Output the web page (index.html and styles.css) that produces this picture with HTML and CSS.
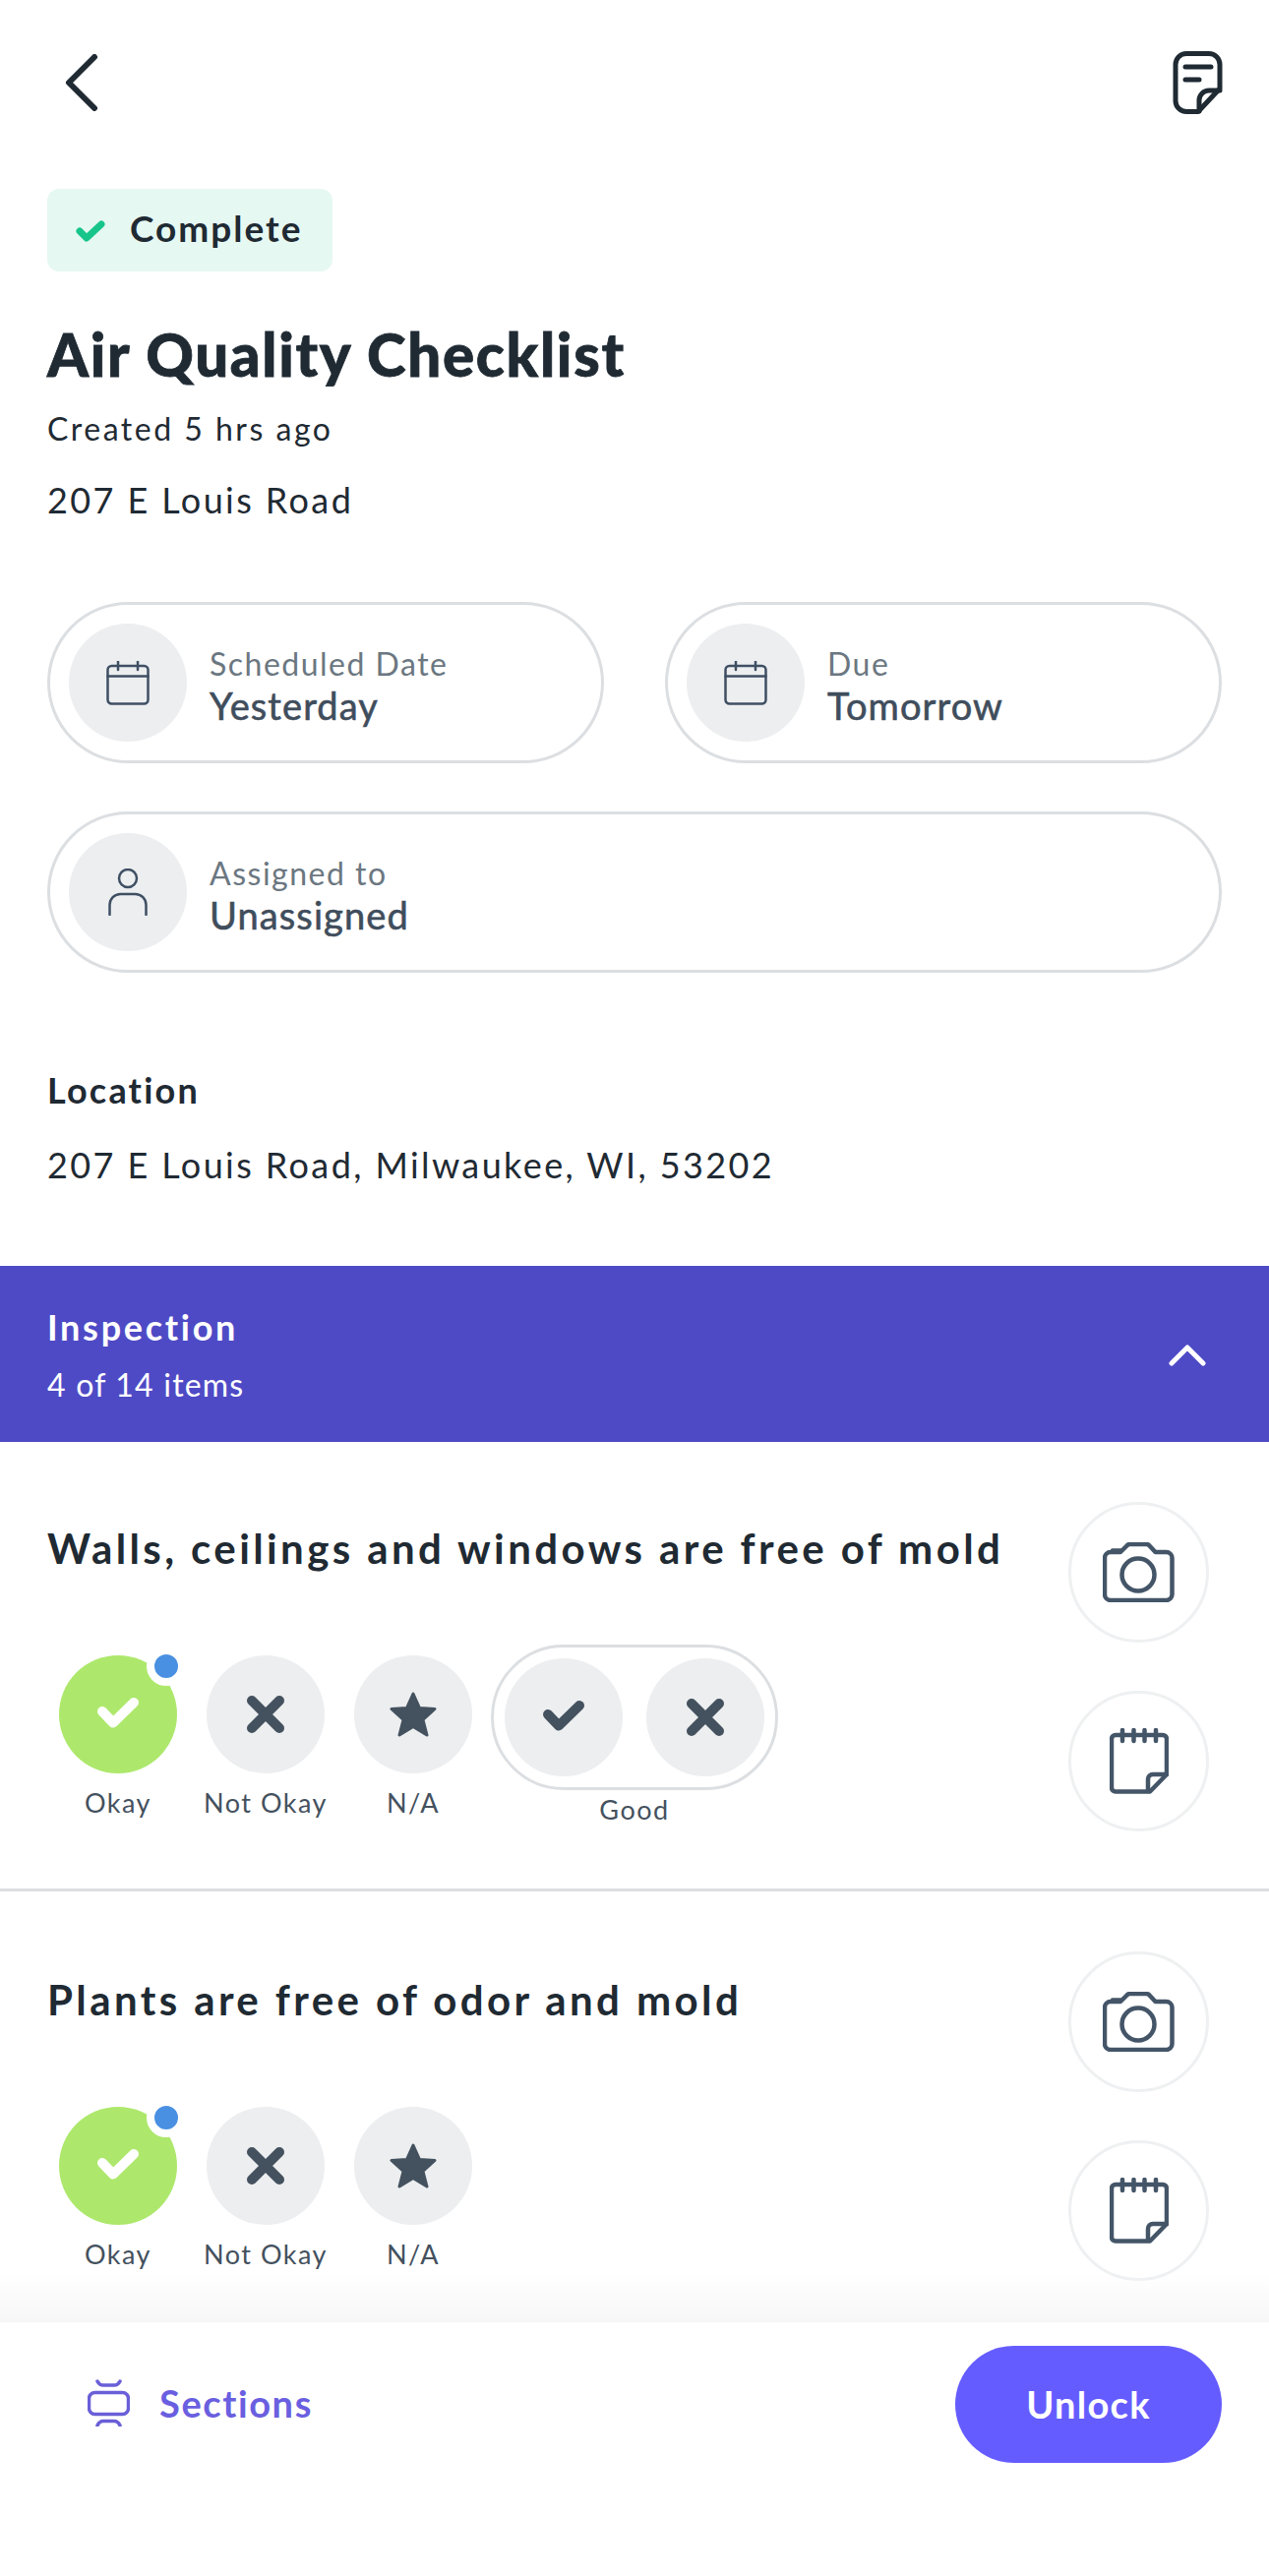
FILE: index.html
```html
<!DOCTYPE html>
<html lang="en">
<head>
    <meta charset="UTF-8">
    <meta name="viewport" content="width=device-width, initial-scale=1.0">
    <title>Air Quality Checklist</title>
    <link rel="stylesheet" href="styles.css">
</head>
<body>
    <svg class="defs" width="0" height="0">
        <symbol id="calendar" viewBox="0 0 44 45">
            <rect x="1.5" y="5" width="41" height="38.5" rx="4"/>
            <path d="M1.5 15.5H42.5M12 0V9M32 0V9"/>
        </symbol>
        <symbol id="camera" viewBox="0 0 73 61">
            <path d="M2 16a6 6 0 0 1 6-6h10l6.5-6.5a4 4 0 0 1 3-1.5h17a4 4 0 0 1 3 1.5l6 6.5h11a6 6 0 0 1 6 6v37a6 6 0 0 1-6 6H8a6 6 0 0 1-6-6z"/>
            <circle cx="36" cy="33" r="16.5"/>
            <path d="M10 8.500H18"/>
        </symbol>
        <symbol id="notepad" viewBox="0 0 60 67">
            <path d="M6 7H54a4 4 0 0 1 4 4V47L41 64.500H6a4 4 0 0 1-4-4V11a4 4 0 0 1 4-4z"/>
            <path d="M58 47H44a5 5 0 0 0-5 5V64M13 2V13M24.500 2V13M35.500 2V13M47 2V13"/>
        </symbol>
        <symbol id="check" viewBox="0 0 42 31">
            <path d="M5 14L16 25.500L37 5"/>
        </symbol>
        <symbol id="cross" viewBox="0 0 40 40">
            <path d="M6 6L34 34M34 6L6 34"/>
        </symbol>
        <symbol id="star" viewBox="0 0 48 46">
            <path d="M24 2L30.500 16.500L46 17.500L34 28.500L38 44L24 35.500L10 44L14 28.500L2 17.500L17.500 16.500Z"/>
        </symbol>
    </svg>

    <div class="page">
        <div class="scroll">
            <div class="topbar">
                <svg class="back" width="34" height="58" viewBox="0 0 34 58"><path d="M30 3L4 29L30 55"/></svg>
                <svg class="notes" width="51" height="64" viewBox="0 0 51 64">
                    <path d="M14 2.500H37a11 11 0 0 1 11 11V38L26 61.500H14a11 11 0 0 1-11-11V13.500a11 11 0 0 1 11-11z"/>
                    <path d="M48 40H37a10 10 0 0 0-10 10V61M13 16H39M13 29H27"/>
                </svg>
            </div>

            <div class="summary">
                <div class="badge">
                    <svg class="badge-check" width="31" height="25" viewBox="0 0 31 25"><path d="M4 13L11 20L26 6"/></svg>
                    <span>Complete</span>
                </div>
                <h1>Air Quality Checklist</h1>
                <p class="created">Created 5 hrs ago</p>
                <p class="address">207 E Louis Road</p>
            </div>

            <div class="pills">
                <div class="pill">
                    <div class="pill-icon"><svg class="line-icon" width="44" height="45"><use href="#calendar"/></svg></div>
                    <div class="pill-text">
                        <div class="pill-label">Scheduled Date</div>
                        <div class="pill-value">Yesterday</div>
                    </div>
                </div>
                <div class="pill">
                    <div class="pill-icon"><svg class="line-icon" width="44" height="45"><use href="#calendar"/></svg></div>
                    <div class="pill-text">
                        <div class="pill-label">Due</div>
                        <div class="pill-value">Tomorrow</div>
                    </div>
                </div>
                <div class="pill pill-wide">
                    <div class="pill-icon">
                        <svg class="line-icon" width="40" height="48" viewBox="0 0 40 48">
                            <circle cx="20" cy="10" r="9"/>
                            <path d="M1.500 47V37a11 11 0 0 1 11-11h15a11 11 0 0 1 11 11V47"/>
                        </svg>
                    </div>
                    <div class="pill-text">
                        <div class="pill-label">Assigned to</div>
                        <div class="pill-value">Unassigned</div>
                    </div>
                </div>
            </div>

            <div class="location">
                <h2>Location</h2>
                <p class="address">207 E Louis Road, Milwaukee, WI, 53202</p>
            </div>

            <div class="band">
                <div>
                    <div class="band-title">Inspection</div>
                    <div class="band-count">4 of 14 items</div>
                </div>
                <svg class="band-arrow" width="38" height="24" viewBox="0 0 38 24"><path d="M3 21L19 5L35 21"/></svg>
            </div>

            <div class="item item-line">
                <div class="item-main">
                    <h3>Walls, ceilings and windows are free of mold</h3>
                    <div class="answers">
                        <div class="answer">
                            <div class="circle circle-on">
                                <svg class="thick-icon check-icon" width="42" height="31"><use href="#check"/></svg>
                                <span class="dot"></span>
                            </div>
                            <span class="answer-label">Okay</span>
                        </div>
                        <div class="answer">
                            <div class="circle"><svg class="thick-icon" width="40" height="40"><use href="#cross"/></svg></div>
                            <span class="answer-label">Not Okay</span>
                        </div>
                        <div class="answer">
                            <div class="circle"><svg class="star-icon" width="48" height="46"><use href="#star"/></svg></div>
                            <span class="answer-label">N/A</span>
                        </div>
                        <div class="answer answer-group">
                            <div class="group">
                                <div class="circle"><svg class="thick-icon check-icon" width="42" height="31"><use href="#check"/></svg></div>
                                <div class="circle"><svg class="thick-icon" width="40" height="40"><use href="#cross"/></svg></div>
                            </div>
                            <span class="answer-label">Good</span>
                        </div>
                    </div>
                </div>
                <div class="item-tools">
                    <div class="tool"><svg class="tool-icon" width="73" height="61"><use href="#camera"/></svg></div>
                    <div class="tool"><svg class="tool-icon" width="60" height="67"><use href="#notepad"/></svg></div>
                </div>
            </div>

            <div class="item item-last">
                <div class="item-main">
                    <h3>Plants are free of odor and mold</h3>
                    <div class="answers">
                        <div class="answer">
                            <div class="circle circle-on">
                                <svg class="thick-icon check-icon" width="42" height="31"><use href="#check"/></svg>
                                <span class="dot"></span>
                            </div>
                            <span class="answer-label">Okay</span>
                        </div>
                        <div class="answer">
                            <div class="circle"><svg class="thick-icon" width="40" height="40"><use href="#cross"/></svg></div>
                            <span class="answer-label">Not Okay</span>
                        </div>
                        <div class="answer">
                            <div class="circle"><svg class="star-icon" width="48" height="46"><use href="#star"/></svg></div>
                            <span class="answer-label">N/A</span>
                        </div>
                    </div>
                </div>
                <div class="item-tools">
                    <div class="tool"><svg class="tool-icon" width="73" height="61"><use href="#camera"/></svg></div>
                    <div class="tool"><svg class="tool-icon" width="60" height="67"><use href="#notepad"/></svg></div>
                </div>
            </div>
        </div>

        <div class="footer">
            <div class="sections">
                <svg class="sections-icon" width="43" height="48" viewBox="0 0 43 48">
                    <rect x="1.500" y="13.500" width="40" height="22" rx="6"/>
                    <path d="M10 2Q12 6 16 6H27Q31 6 33 2M10 47Q12 42.500 16 42.500H27Q31 42.500 33 47"/>
                </svg>
                <span>Sections</span>
            </div>
            <button class="unlock">Unlock</button>
        </div>
    </div>
</body>
</html>
```

FILE: styles.css
```css
* {
    box-sizing: border-box;
}
body {
    font-family: Lato, "Open Sans", sans-serif;
    background-color: white;
    color: #1f2a33;
    margin: 0;
}
h1, h2, h3, p {
    margin: 0;
    font-weight: normal;
}
svg {
    display: block;
    flex: none;
    fill: none;
    stroke-linecap: round;
    stroke-linejoin: round;
}
.defs {
    position: absolute;
}
.page {
    display: flex;
    flex-direction: column;
    height: 2619px;
    overflow: hidden;
}
.scroll {
    flex: 1;
    min-height: 0;
    overflow: hidden;
}

/* top */
.topbar {
    display: flex;
    justify-content: space-between;
    align-items: center;
    height: 116px;
    padding: 52px 47px 0 66px;
}
.back path {
    stroke: #1f2a33;
    stroke-width: 6;
}
.notes path {
    stroke: #1f2a33;
    stroke-width: 5;
}
.summary {
    padding: 76px 48px 0;
}
.badge {
    display: flex;
    align-items: center;
    gap: 24px;
    width: 290px;
    height: 84px;
    padding: 0 0 6px 29px;
    background: #e6f8f2;
    border-radius: 12px;
    font-size: 37px;
    font-weight: 700;
    letter-spacing: 2px;
}
.badge-check {
    margin-top: 6px;
}
.badge-check path {
    stroke: #17c58a;
    stroke-width: 7;
}
h1 {
    margin-top: 49px;
    font-size: 60px;
    line-height: 70px;
    font-weight: 900;
    letter-spacing: 1.700px;
    -webkit-text-stroke: 0.8px #1f2a33;
}
.created {
    margin-top: 21px;
    font-size: 32px;
    line-height: 40px;
    letter-spacing: 2.500px;
}
.address {
    font-size: 36px;
    line-height: 44px;
    letter-spacing: 2.400px;
}
.summary .address {
    margin-top: 30px;
}

/* pills */
.pills {
    display: grid;
    grid-template-columns: 566px 566px;
    gap: 49px 62px;
    padding: 82px 48px 0;
}
.pill {
    display: flex;
    align-items: center;
    gap: 23px;
    height: 164px;
    padding-left: 19px;
    border: 3px solid #dcdfe2;
    border-radius: 82px;
}
.pill-wide {
    grid-column: 1 / 3;
}
.pill-icon {
    display: flex;
    align-items: center;
    justify-content: center;
    width: 120px;
    height: 120px;
    border-radius: 50%;
    background: #eceef0;
}
.pill-text {
    padding-top: 7px;
}
.line-icon {
    stroke: #3f4f63;
    stroke-width: 2.500;
}
.pill-label {
    font-size: 32px;
    line-height: 40px;
    color: #6b7781;
    letter-spacing: 1.500px;
}
.pill-value {
    margin-top: -1px;
    font-size: 38px;
    line-height: 46px;
    color: #3f4d5c;
    letter-spacing: 1.100px;
    -webkit-text-stroke: 0.6px #3f4d5c;
}

/* location */
.location {
    padding: 97px 48px 0;
}
h2 {
    font-size: 36px;
    line-height: 44px;
    font-weight: 700;
    letter-spacing: 2.200px;
}
.location .address {
    margin-top: 32px;
}

/* purple section header */
.band {
    display: flex;
    justify-content: space-between;
    align-items: center;
    height: 179px;
    margin-top: 81px;
    padding: 0 64px 0 48px;
    background: #4e4ac6;
    color: white;
}
.band-title {
    margin-top: 2px;
    font-size: 36px;
    line-height: 44px;
    font-weight: 700;
    letter-spacing: 2.700px;
}
.band-count {
    margin-top: 17px;
    font-size: 32px;
    line-height: 40px;
    letter-spacing: 1.200px;
}
.band-arrow path {
    stroke: white;
    stroke-width: 5;
}

/* checklist items */
.item {
    display: flex;
    justify-content: space-between;
    padding: 61px 61px 58px 48px;
}
.item-line {
    border-bottom: 3px solid #dcdfe2;
}
h3 {
    margin-top: 23px;
    font-size: 42px;
    line-height: 48px;
    font-weight: 700;
    letter-spacing: 3.400px;
    white-space: nowrap;
}
.item-last h3 {
    margin-top: 25px;
}
.answers {
    display: flex;
    gap: 30px;
    margin: 85px 0 0 12px;
}
.answer {
    display: flex;
    flex-direction: column;
    align-items: center;
    width: 120px;
}
.answer-label {
    margin-top: 13px;
    font-size: 27px;
    line-height: 34px;
    color: #44515e;
    letter-spacing: 1.500px;
    white-space: nowrap;
}
.circle {
    position: relative;
    display: flex;
    align-items: center;
    justify-content: center;
    flex: none;
    width: 120px;
    height: 120px;
    border-radius: 50%;
    background: #eceef0;
}
.circle-on {
    background: #ade86c;
}
.circle-on .thick-icon {
    stroke: white;
}
.dot {
    position: absolute;
    top: -9px;
    left: 89px;
    width: 40px;
    height: 40px;
    border: 8px solid white;
    border-radius: 50%;
    background: #4a90e2;
}
.thick-icon {
    stroke: #44515e;
    stroke-width: 10;
}
.check-icon {
    margin-bottom: 3px;
}
.star-icon {
    fill: #44515e;
    stroke: #44515e;
    stroke-width: 3;
}
.answer-group {
    width: auto;
    margin: -11px 0 0 -11px;
}
.group {
    display: flex;
    gap: 24px;
    padding: 11px;
    border: 3px solid #dcdfe2;
    border-radius: 74px;
}
.answer-group .answer-label {
    margin-top: 3px;
}
.item-tools {
    display: flex;
    flex-direction: column;
    gap: 49px;
}
.tool {
    display: flex;
    align-items: center;
    justify-content: center;
    width: 143px;
    height: 143px;
    border: 3px solid #eef0f1;
    border-radius: 50%;
}
.tool-icon {
    stroke: #445568;
    stroke-width: 4.500;
}

/* bottom bar */
.footer {
    position: relative;
    display: flex;
    justify-content: space-between;
    align-items: flex-start;
    flex: none;
    height: 258px;
    padding: 24px 48px 0 89px;
    background: white;
}
.footer::before {
    content: "";
    position: absolute;
    left: 0;
    right: 0;
    bottom: 100%;
    height: 50px;
    background: linear-gradient(rgba(247, 247, 247, 0), #f7f7f7);
}
.sections {
    display: flex;
    align-items: center;
    gap: 30px;
    height: 119px;
    padding-bottom: 4px;
    color: #6a5fe0;
    font-size: 38px;
    font-weight: 700;
    letter-spacing: 1.600px;
}
.sections-icon {
    stroke: #6a5fd8;
    stroke-width: 3.500;
}
.unlock {
    width: 271px;
    height: 119px;
    padding-bottom: 2px;
    border: none;
    border-radius: 60px;
    background: #655cff;
    color: white;
    font-family: inherit;
    font-size: 38px;
    font-weight: 700;
    letter-spacing: 1.300px;
    cursor: pointer;
}
```
